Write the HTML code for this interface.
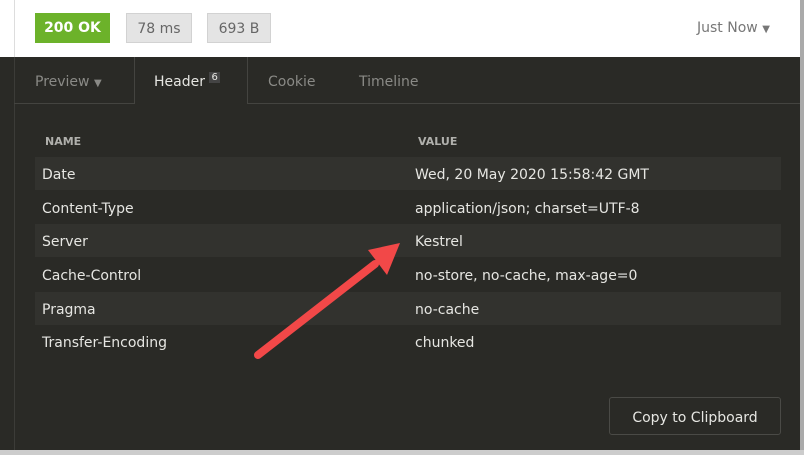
<html><head><style>
body{margin:0;width:804px;height:455px;background:#fff;font-family:"DejaVu Sans","Liberation Sans",sans-serif;position:relative;overflow:hidden}
.a{position:absolute}
.pill{position:absolute;top:13px;height:30px;line-height:31px;font-size:14px;text-align:center}
.row{position:absolute;left:35px;width:746px;height:33px;line-height:37px;font-size:14px;color:#e6e6e2}
.row span{position:absolute;left:7px}.row b{font-weight:normal;position:absolute;left:380px}
</style></head><body>
<div class="a" style="left:14px;top:0;width:1px;height:57px;background:#ddd"></div>
<div class="pill" style="left:35px;width:75px;background:#6cb22a;color:#fff;font-weight:bold">200 OK</div>
<div class="pill" style="left:126px;width:64px;background:#e4e4e4;border:1px solid #d2d2d2;height:28px;line-height:30px;color:#666">78 ms</div>
<div class="pill" style="left:207px;width:62px;background:#e4e4e4;border:1px solid #d2d2d2;height:28px;line-height:30px;color:#666">693 B</div>
<div class="a" style="left:697px;top:20px;font-size:14px;color:#777">Just Now <span style="font-size:10px">▼</span></div>
<div class="a" style="left:0;top:57px;width:800px;height:393px;background:#2a2a26"></div>
<div class="a" style="left:800px;top:0;width:4px;height:455px;background:#aaa"></div>
<div class="a" style="left:0;top:450px;width:804px;height:5px;background:#ccc"></div>
<div class="a" style="left:14px;top:57px;width:1px;height:393px;background:#3c3c38"></div>
<div class="a" style="left:14px;top:103px;width:786px;height:1px;background:#444440"></div>
<div class="a" style="left:134px;top:57px;width:112px;height:47px;background:#2a2a26;border-left:1px solid #444440;border-right:1px solid #444440"></div>
<div class="a" style="left:35px;top:74px;font-size:14px;color:#8a8a86">Preview <span style="font-size:10px">▼</span></div>
<div class="a" style="left:154px;top:74px;font-size:14px;color:#e6e6e2">Header <span style="font-size:10px;background:#444;padding:0 2px;position:relative;top:-6px">6</span></div>
<div class="a" style="left:268px;top:74px;font-size:14px;color:#8a8a86">Cookie</div>
<div class="a" style="left:359px;top:74px;font-size:14px;color:#8a8a86">Timeline</div>
<div class="a" style="left:45px;top:135px;font-size:11px;font-weight:bold;color:#b0b0ac">NAME</div>
<div class="a" style="left:418px;top:135px;font-size:11px;font-weight:bold;color:#b0b0ac">VALUE</div>
<div class="row" style="top:157px;background:#32322e"><span>Date</span><b>Wed, 20 May 2020 15:58:42 GMT</b></div>
<div class="row" style="top:191px"><span>Content-Type</span><b>application/json; charset=UTF-8</b></div>
<div class="row" style="top:224px;background:#32322e"><span>Server</span><b>Kestrel</b></div>
<div class="row" style="top:258px"><span>Cache-Control</span><b>no-store, no-cache, max-age=0</b></div>
<div class="row" style="top:292px;background:#32322e"><span>Pragma</span><b>no-cache</b></div>
<div class="row" style="top:325px"><span>Transfer-Encoding</span><b>chunked</b></div>
<div class="a" style="left:609px;top:397px;width:170px;height:36px;border:1px solid #4a4a46;border-radius:3px;line-height:41px;text-align:center;font-size:14px;color:#e6e6e2">Copy to Clipboard</div>
<svg class="a" style="left:0;top:0" width="804" height="455"><line x1="258" y1="355" x2="375" y2="264" stroke="#f24848" stroke-width="8" stroke-linecap="round"/><polygon points="400,243 368,250 387,275" fill="#f24848"/></svg>
</body></html>
